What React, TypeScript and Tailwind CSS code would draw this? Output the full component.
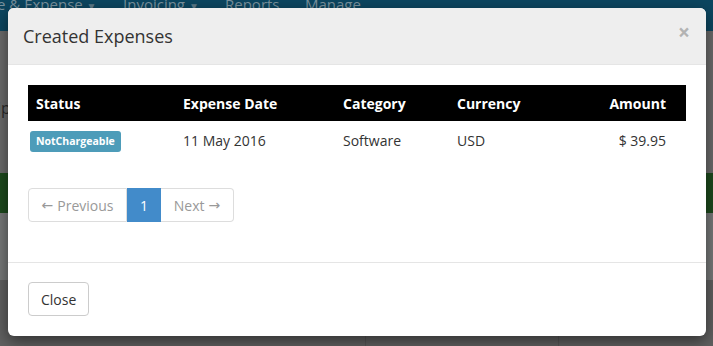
const rows = [
  { status: "NotChargeable", date: "11 May 2016", category: "Software", currency: "USD", amount: "$ 39.95" },
];

export default function App() {
  return (
    <div className="relative h-[346px] w-[713px] overflow-hidden bg-[#6a6b6b] font-['Open_Sans',sans-serif] text-[14px] text-[#333]">
      {/* dimmed page behind the modal */}
      <div className="flex h-[31px] items-start bg-[#0c4660] text-[15px] text-[#7a929e]">
        <span className="-mt-[7px] -ml-[3px] w-[126px] shrink-0">e &amp; Expense <span className="text-[10px] text-[#5d7a88]">▼</span></span>
        <span className="-mt-[7px] w-[102px] shrink-0">Invoicing <span className="text-[10px] text-[#5d7a88]">▼</span></span>
        <span className="-mt-[7px] w-[80px] shrink-0">Reports</span>
        <span className="-mt-[7px] shrink-0">Manage</span>
      </div>
      <div className="h-[142px] bg-[#6b6b6b] pt-[65px] text-[16px] text-[#2a2a2a]">
        <span className="-ml-[3px]">ip</span>
      </div>
      <div className="h-[40px] bg-[#1d4a1d]" />
      <div className="h-[67px] bg-[#777979]" />
      <div className="flex h-[66px] bg-[#606060]">
        <div className="w-[366px] border-r border-[#555]" />
        <div className="w-[193px] border-r border-[#555]" />
      </div>

      {/* modal */}
      <div className="absolute left-[8px] top-[8px] w-[698px] overflow-hidden rounded-[6px] bg-white shadow-[0_5px_15px_rgba(0,0,0,0.5)]">
        <div className="flex h-[57px] items-center justify-between border-b border-[#e5e5e5] bg-[#eeeeee] pl-[15px] pr-[16px]">
          <h4 className="text-[18px] leading-none text-[#333]">Created Expenses</h4>
          <button className="-mt-[8px] text-[21px] font-bold leading-none text-[#b3b3b3]">×</button>
        </div>

        <div className="p-[20px]">
          <table className="w-full table-fixed border-collapse">
            <colgroup>
              <col className="w-[147px]" />
              <col className="w-[160px]" />
              <col className="w-[114px]" />
              <col className="w-[150px]" />
              <col />
            </colgroup>
            <thead>
              <tr className="h-[36px] bg-black text-left font-bold text-white">
                <th className="px-[8px]">Status</th>
                <th className="px-[8px]">Expense Date</th>
                <th className="px-[8px]">Category</th>
                <th className="px-[8px]">Currency</th>
                <th className="pr-[20px] text-right">Amount</th>
              </tr>
            </thead>
            <tbody>
              {rows.map((row) => (
                <tr key={row.date} className="h-[38px]">
                  <td className="pl-[2px]">
                    <span className="inline-block rounded-[3px] bg-[#4d9cb9] px-[6px] py-[3px] text-[10.5px] font-bold leading-[15px] text-white">
                      {row.status}
                    </span>
                  </td>
                  <td className="px-[8px]">{row.date}</td>
                  <td className="px-[8px]">{row.category}</td>
                  <td className="px-[8px]">{row.currency}</td>
                  <td className="pr-[20px] text-right">{row.amount}</td>
                </tr>
              ))}
            </tbody>
          </table>

          <div className="mb-[20px] mt-[29px] flex w-fit text-[#999]">
            <span className="flex h-[34px] w-[99px] items-center justify-center rounded-l-[4px] border border-[#ddd]">
              <span className="mr-[4px] font-['DejaVu_Sans',sans-serif]">←</span>Previous
            </span>
            <span className="flex h-[34px] w-[34px] items-center justify-center border border-[#428bca] bg-[#428bca] text-white">1</span>
            <span className="flex h-[34px] w-[73px] items-center justify-center rounded-r-[4px] border border-l-0 border-[#ddd]">
              Next<span className="ml-[4px] font-['DejaVu_Sans',sans-serif]">→</span>
            </span>
          </div>
        </div>

        <div className="border-t border-[#e5e5e5] p-[20px] pt-[19px]">
          <button className="h-[34px] rounded-[4px] border border-[#ccc] bg-white px-[12px] text-[#333]">Close</button>
        </div>
      </div>
    </div>
  );
}
